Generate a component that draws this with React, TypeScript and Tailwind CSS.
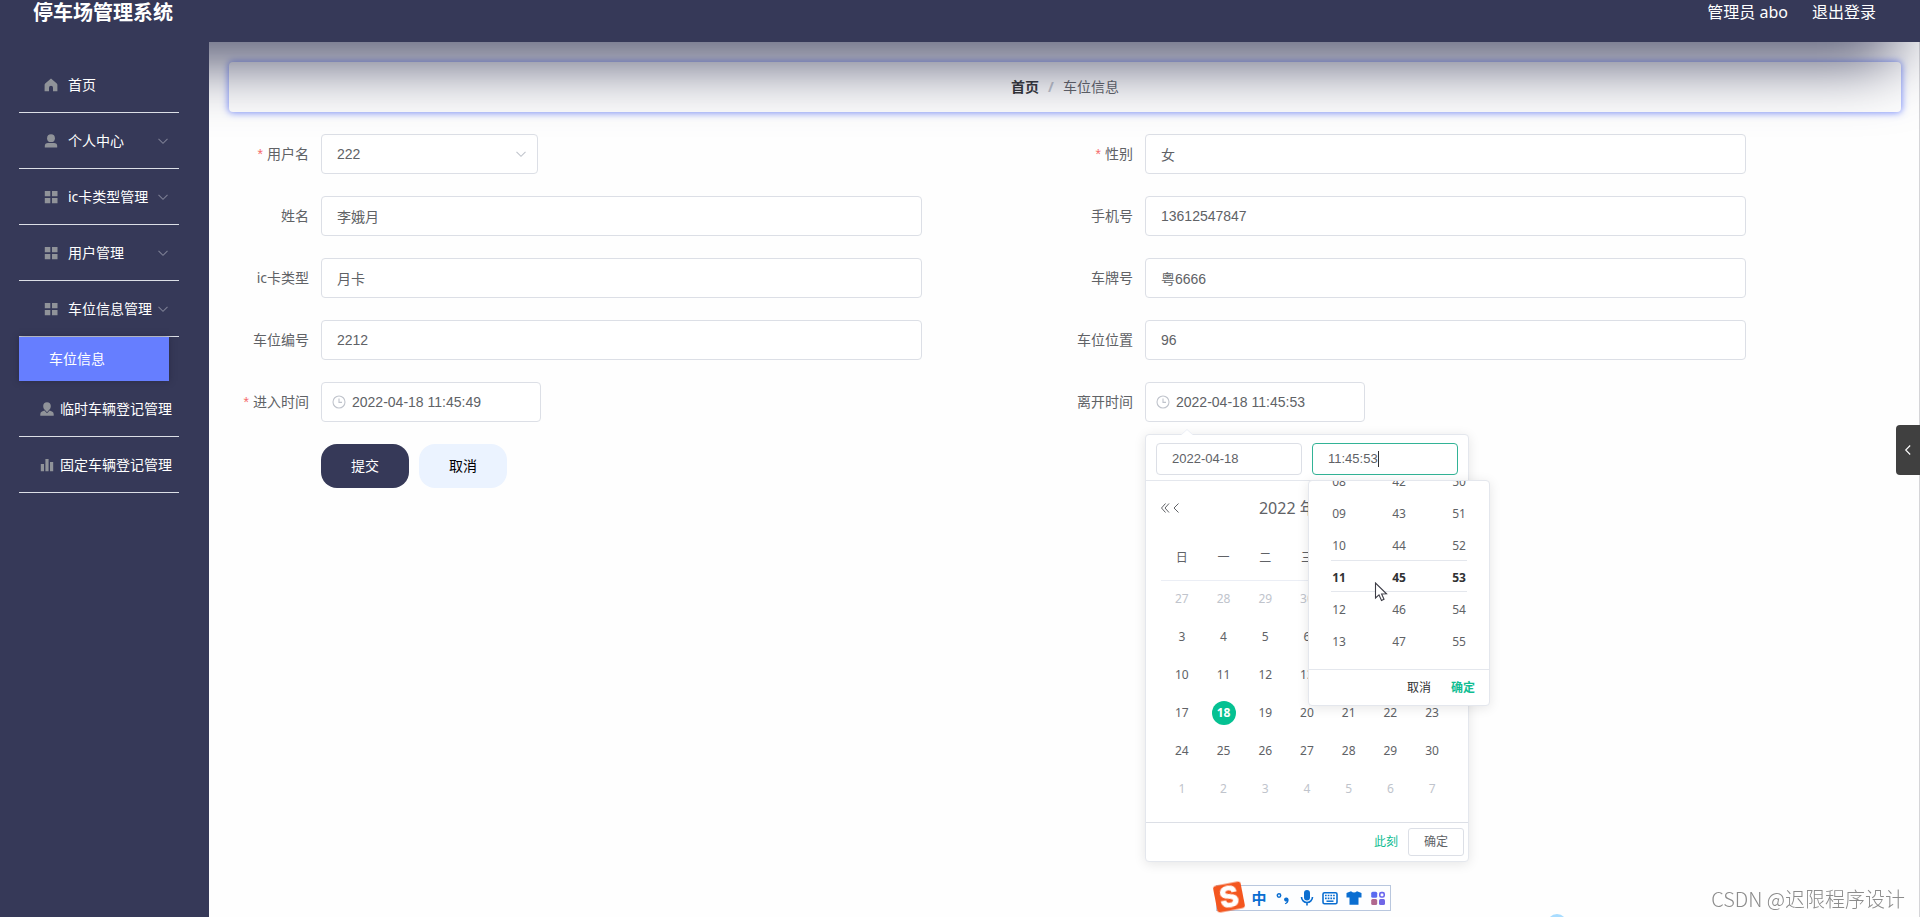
import React from "react";

const LATIN_FORM =
  "font-['Liberation_Sans','Noto_Sans_CJK_SC',sans-serif] text-[14px] text-[#606266]";

function HomeIcon() {
  return (
    <svg viewBox="0 0 14 14" className="h-[14px] w-[14px]" fill="currentColor">
      <path d="M7 0.500 L12.800 5.400 Q13.400 6 13.400 6.800 V13.200 H9 V9.800 A2 2 0 0 0 5 9.800 V13.200 H0.600 V6.800 Q0.600 6 1.200 5.400 Z" />
    </svg>
  );
}

function UserIcon() {
  return (
    <svg viewBox="0 0 14 14" className="h-[14px] w-[14px]" fill="currentColor">
      <circle cx="7" cy="4.200" r="3.900" />
      <path d="M0.800 13.500 V12 Q0.800 9 4 9 H10 Q13.200 9 13.200 12 V13.500 Z" />
    </svg>
  );
}

function GridIcon() {
  return (
    <svg viewBox="0 0 14 14" className="h-[14px] w-[14px]" fill="currentColor">
      <path d="M0.800 1 H6.300 V6.300 H0.800 Z M8 1 H13.500 V6.300 H8 Z M0.800 8 H6.300 V13.300 H0.800 Z M8 8 H13.500 V13.300 H8 Z" />
    </svg>
  );
}

function PersonIcon() {
  return (
    <svg viewBox="0 0 14 14" className="h-[14px] w-[14px]" fill="currentColor">
      <path d="M7 0.300 C9.400 0.300 10.800 2 10.800 4 C10.800 6 9.700 7.600 8.800 8.300 L7 10.200 L5.200 8.300 C4.300 7.600 3.200 6 3.200 4 C3.200 2 4.600 0.300 7 0.300 Z" />
      <path d="M4.400 8.500 L7 11.200 L9.600 8.500 L12 9.600 Q13.700 10.400 13.700 12 V13.800 H0.300 V12 Q0.300 10.400 2 9.600 Z" />
    </svg>
  );
}

function BarsIcon() {
  return (
    <svg viewBox="0 0 14 14" className="h-[14px] w-[14px]" fill="currentColor">
      <path d="M0.800 6 H4 V13.200 H0.800 Z M5.400 1 H8.600 V13.200 H5.400 Z M10 4 H13.200 V13.200 H10 Z" />
    </svg>
  );
}

function Chevron({ className }: { className: string }) {
  return (
    <svg
      viewBox="0 0 12 12"
      className={className}
      fill="none"
      stroke="currentColor"
      strokeWidth="1.100"
    >
      <path d="M1.500 3.800 L6 8.300 L10.500 3.800" />
    </svg>
  );
}

function ClockIcon() {
  return (
    <svg
      viewBox="0 0 14 14"
      className="pointer-events-none absolute top-[13px] left-[11px] h-[14px] w-[14px] text-[#c0c4cc]"
      fill="none"
      stroke="currentColor"
      strokeWidth="1.100"
    >
      <circle cx="7" cy="7" r="6" />
      <path d="M7 3.500 V7.400 H10" />
    </svg>
  );
}

const menu = [
  { text: "首页", icon: <HomeIcon />, arrow: false },
  { text: "个人中心", icon: <UserIcon />, arrow: true },
  { text: "ic卡类型管理", icon: <GridIcon />, arrow: true },
  { text: "用户管理", icon: <GridIcon />, arrow: true },
  { text: "车位信息管理", icon: <GridIcon />, arrow: true },
];

const extraMenu = [
  { text: "临时车辆登记管理", icon: <PersonIcon /> },
  { text: "固定车辆登记管理", icon: <BarsIcon /> },
];

function Sidebar() {
  return (
    <nav className="relative z-20 w-[209px] shrink-0 bg-[#363958] pt-[15px] pr-[30px] pl-[19px] text-[14px] whitespace-nowrap text-white">
      {menu.map((m) => (
        <a
          key={m.text}
          href="#"
          className="flex h-14 items-center border-b border-[#dcdfe6] pr-[10px] pl-5"
        >
          <span className="mr-[5px] flex w-6 justify-center text-[#909399]">{m.icon}</span>
          <span className="flex-1">{m.text}</span>
          {m.arrow && <Chevron className="h-3 w-3 text-[#7c7f93]" />}
        </a>
      ))}
      <a
        href="#"
        className="mr-[10px] flex h-11 items-center bg-[#667eff] pb-[2px] pl-[30px] shadow-[0_0_6px_rgba(30,30,50,0.5)]"
      >
        车位信息
      </a>
      {extraMenu.map((m) => (
        <a
          key={m.text}
          href="#"
          className="flex h-14 items-center border-b border-[#dcdfe6] pl-4"
        >
          <span className="mr-px flex w-6 justify-center text-[#909399]">{m.icon}</span>
          <span>{m.text}</span>
        </a>
      ))}
    </nav>
  );
}

function Field({
  id,
  label,
  required,
  children,
}: {
  id: string;
  label: string;
  required?: boolean;
  children: React.ReactNode;
}) {
  return (
    <div className="flex">
      <label
        htmlFor={id}
        className="w-20 shrink-0 pr-3 text-right leading-10 whitespace-nowrap text-[#606266]"
      >
        {required && (
          <span className="mr-1 font-['Liberation_Sans',sans-serif] text-[#f56c6c]">*</span>
        )}
        {label}
      </label>
      {children}
    </div>
  );
}

function TextField({
  id,
  label,
  value,
  required,
}: {
  id: string;
  label: string;
  value: string;
  required?: boolean;
}) {
  return (
    <Field id={id} label={label} required={required}>
      <input
        id={id}
        type="text"
        defaultValue={value}
        className={`h-10 w-full max-w-[601px] rounded border border-[#dcdfe6] bg-white px-[15px] outline-none ${LATIN_FORM}`}
      />
    </Field>
  );
}

function DateField({
  id,
  label,
  value,
  required,
  children,
}: {
  id: string;
  label: string;
  value: string;
  required?: boolean;
  children?: React.ReactNode;
}) {
  return (
    <Field id={id} label={label} required={required}>
      <div className="relative w-[220px]">
        <input
          id={id}
          type="text"
          defaultValue={value}
          className={`h-10 w-full rounded border border-[#dcdfe6] bg-white pr-[15px] pl-[30px] outline-none ${LATIN_FORM}`}
        />
        <ClockIcon />
        {children}
      </div>
    </Field>
  );
}

const weekdays = ["日", "一", "二", "三", "四", "五", "六"];
const weeks = [
  [27, 28, 29, 30, 31, 1, 2],
  [3, 4, 5, 6, 7, 8, 9],
  [10, 11, 12, 13, 14, 15, 16],
  [17, 18, 19, 20, 21, 22, 23],
  [24, 25, 26, 27, 28, 29, 30],
  [1, 2, 3, 4, 5, 6, 7],
];

function isOtherMonth(week: number, day: number) {
  return (week === 0 && day > 7) || (week === 5 && day < 8);
}

const wheels = [
  ["08", "09", "10", "11", "12", "13"],
  ["42", "43", "44", "45", "46", "47"],
  ["50", "51", "52", "53", "54", "55"],
];

function TimePanel() {
  return (
    <div className="absolute top-full -left-1 z-10 mt-[5px] w-[182px] rounded-sm border border-[#e4e7ed] bg-white text-[12px] shadow-[0_2px_12px_rgba(0,0,0,0.1)]">
      <div className="relative h-[188px] overflow-hidden">
        <div className="-mt-[15px] grid grid-cols-3">
          {wheels.map((wheel) => (
            <ul key={wheel[0]}>
              {wheel.map((v, i) => (
                <li
                  key={v}
                  className={
                    i === 3
                      ? "h-8 text-center leading-8 font-bold text-[#303133]"
                      : "h-8 text-center leading-8 text-[#606266]"
                  }
                >
                  {v}
                </li>
              ))}
            </ul>
          ))}
        </div>
        <div className="pointer-events-none absolute top-[79px] right-[22px] left-[22px] h-8 border-y border-[#e4e7ed]" />
      </div>
      <div className="flex h-9 items-center justify-end gap-5 border-t border-[#e4e7ed] pr-[14px]">
        <button type="button" className="text-[#303133]">
          取消
        </button>
        <button type="button" className="font-bold text-[#10bd92]">
          确定
        </button>
      </div>
    </div>
  );
}

function Arrow({ double, right }: { double?: boolean; right?: boolean }) {
  return (
    <svg
      viewBox="0 0 12 12"
      className={right ? "h-3 w-3 rotate-180" : "h-3 w-3"}
      fill="none"
      stroke="currentColor"
      strokeWidth="1"
    >
      {double ? (
        <path d="M4.500 1.500 L0.500 6 L4.500 10.500 M8 1.500 L4 6 L8 10.500" />
      ) : (
        <path d="M5.500 1.500 L1 6 L5.500 10.500" />
      )}
    </svg>
  );
}

function DatePanel() {
  return (
    <div className="absolute top-full left-0 z-10 mt-3 w-[324px] rounded border border-[#e4e7ed] bg-white text-[12px] text-[#606266] shadow-[0_2px_12px_rgba(0,0,0,0.1)]">
      <svg viewBox="0 0 12 6" className="absolute -top-[6px] left-[35px] h-[6px] w-3">
        <path d="M0 6 L6 0.500 L12 6" fill="#fff" stroke="#ebeef5" strokeWidth="1" />
      </svg>
      <div className="grid h-[46px] grid-cols-2 items-start gap-[10px] border-b border-[#e4e7ed] px-[10px] pt-2">
        <input
          type="text"
          aria-label="日期"
          defaultValue="2022-04-18"
          className="h-8 w-full min-w-0 rounded border border-[#dcdfe6] px-[15px] pb-[2px] font-['Liberation_Sans',sans-serif] text-[13px] outline-none"
        />
        <div className="relative flex min-w-0">
          <input
            type="text"
            aria-label="时间"
            defaultValue="11:45:53"
            className="h-8 w-full min-w-0 rounded border border-[#32b396] px-[15px] pb-[2px] font-['Liberation_Sans',sans-serif] text-[13px] outline-none"
          />
          <span className="absolute top-2 left-[66px] h-4 w-px bg-[#303133]" />
          <TimePanel />
        </div>
      </div>
      <div className="px-[15px] pt-3 pb-[14px]">
        <div className="flex h-[30px] items-center justify-between">
          <div className="flex">
            <button type="button" aria-label="上一年">
              <Arrow double />
            </button>
            <button type="button" aria-label="上个月">
              <Arrow />
            </button>
          </div>
          <div className="flex gap-[10px] text-[16px]">
            <button type="button">2022 年</button>
            <button type="button">4 月</button>
          </div>
          <div className="flex">
            <button type="button" aria-label="下个月">
              <Arrow right />
            </button>
            <button type="button" aria-label="下一年">
              <Arrow double right />
            </button>
          </div>
        </div>
        <table className="mt-4 w-full table-fixed border-collapse">
          <thead>
            <tr className="h-[41px] border-b border-[#ebeef5]">
              {weekdays.map((d) => (
                <th key={d} className="pt-0 pb-[2px] font-normal">
                  {d}
                </th>
              ))}
            </tr>
          </thead>
          <tbody>
            {weeks.map((week, w) => (
              <tr key={w} className="h-[38px]">
                {week.map((day) => (
                  <td key={day} className="p-0 text-center">
                    <button
                      type="button"
                      className={
                        w === 3 && day === 18
                          ? "h-6 w-6 rounded-full bg-[#05c192] font-bold text-white"
                          : isOtherMonth(w, day)
                            ? "h-6 w-6 text-[#c0c4cc]"
                            : "h-6 w-6"
                      }
                    >
                      {day}
                    </button>
                  </td>
                ))}
              </tr>
            ))}
          </tbody>
        </table>
      </div>
      <div className="flex h-[39px] items-center justify-end gap-[10px] border-t border-[#dcdfe6] pr-1">
        <button type="button" className="text-[#10bd92]">
          此刻
        </button>
        <button type="button" className="h-7 w-14 rounded-[3px] border border-[#dcdfe6]">
          确定
        </button>
      </div>
    </div>
  );
}

function ImeBar() {
  return (
    <div className="fixed bottom-[6px] left-[1216px] z-30 flex h-[26px] w-[175px] items-center border border-[#b9c7de] bg-[#fdfeff] text-[#0a6ed1]">
      <svg viewBox="0 0 34 34" className="absolute -top-[6px] -left-[5px] h-[34px] w-[34px]">
        <g transform="rotate(-11 17 17)">
          <rect x="3" y="3.500" width="28" height="27" rx="3" fill="#f4561f" />
          <text
            x="17"
            y="27"
            textAnchor="middle"
            fill="#fff"
            stroke="#fff"
            strokeWidth="1"
            className="font-['Inter',sans-serif] text-[29px] font-bold"
          >
            S
          </text>
        </g>
      </svg>
      <div className="ml-[30px] grid flex-1 grid-cols-6 items-center justify-items-center">
        <span className="pb-px text-[15px] leading-5 font-bold">中</span>
        <svg viewBox="0 0 16 16" className="h-4 w-4">
          <circle cx="4" cy="5.500" r="1.700" fill="none" stroke="currentColor" strokeWidth="1.500" />
          <path
            d="M11.500 7.500 A2 2 0 1 0 11.800 11.300 Q11.500 12.600 9.800 13.400 L10.300 14.200 Q13.900 12.800 13.600 9.400 Q13.300 7.500 11.500 7.500 Z"
            fill="currentColor"
          />
        </svg>
        <svg viewBox="0 0 16 16" className="h-4 w-4">
          <rect x="5" y="0" width="6" height="10.500" rx="3" fill="currentColor" />
          <path
            d="M2.500 7 A5.500 5.500 0 0 0 13.500 7 M8 12.500 V15.500"
            fill="none"
            stroke="currentColor"
            strokeWidth="1.600"
          />
        </svg>
        <svg viewBox="0 0 16 16" className="h-4 w-4">
          <rect x="1" y="2.800" width="14" height="11" rx="1.500" fill="#fff" stroke="currentColor" strokeWidth="1.600" />
          <path
            d="M3 5.500 H13 M3 8.300 H13"
            stroke="currentColor"
            strokeWidth="1.700"
            strokeDasharray="1.700 1"
          />
          <path d="M4.500 11.200 H11.500" stroke="currentColor" strokeWidth="1.500" />
        </svg>
        <svg viewBox="0 0 16 16" className="h-4 w-4" fill="currentColor">
          <path d="M5 1.200 Q8 4 11 1.200 L15.500 3 V7.500 H12.500 V14.800 H3.500 V7.500 H0.500 V3 Z" />
        </svg>
        <svg viewBox="0 0 16 16" className="h-4 w-4">
          <rect x="1.200" y="1.800" width="6" height="6" rx="1.500" fill="#5b6cf0" />
          <rect x="9.800" y="2.600" width="4.400" height="4.400" rx="1.500" fill="none" stroke="#6a66ee" strokeWidth="1.600" />
          <rect x="1.200" y="9" width="6" height="6" rx="1.500" fill="#b0688f" />
          <rect x="9" y="9" width="6" height="6" rx="1.500" fill="#6f66e6" />
        </svg>
      </div>
    </div>
  );
}

export default function App() {
  return (
    <div className="relative flex min-h-screen flex-col overflow-hidden bg-[#fefefe] font-['Noto_Sans','Noto_Sans_CJK_SC',sans-serif] text-[14px]">
      <header className="relative z-10 flex h-[42px] items-start justify-between bg-[#363958] pr-11 pl-[33px] text-white shadow-[-36px_4px_66px_12px_#363958]">
        <h1 className="text-[20px] leading-[26px] font-bold">停车场管理系统</h1>
        <div className="flex gap-6 text-[16px] leading-6">
          <span>管理员 abo</span>
          <button type="button">退出登录</button>
        </div>
      </header>

      <div className="flex flex-1">
        <Sidebar />
        <main className="min-w-0 flex-1 border-r border-[#d5d5d8] pt-5 pr-[18px] pl-5">
          <div className="flex h-[50px] items-center justify-center rounded pb-[2px] shadow-[0_0_7px_1px_rgba(102,126,255,0.8)]">
            <a href="#" className="font-bold text-[#303133]">
              首页
            </a>
            <span className="mx-[9px] font-bold text-[#c0c4cc]">/</span>
            <span className="text-[#606266]">车位信息</span>
          </div>

          <form className="grid grid-cols-2 gap-y-[22px] px-3 pt-[22px]">
            <Field id="username" label="用户名" required>
              <div className="relative w-[217px]">
                <select
                  id="username"
                  className={`h-10 w-full appearance-none rounded border border-[#dcdfe6] bg-white px-[15px] outline-none ${LATIN_FORM}`}
                >
                  <option>222</option>
                </select>
                <Chevron className="pointer-events-none absolute top-[14px] right-[11px] h-3 w-3 text-[#c0c4cc]" />
              </div>
            </Field>
            <TextField id="gender" label="性别" value="女" required />
            <TextField id="name" label="姓名" value="李娥月" />
            <TextField id="phone" label="手机号" value="13612547847" />
            <TextField id="cardType" label="ic卡类型" value="月卡" />
            <TextField id="plate" label="车牌号" value="粤6666" />
            <TextField id="spaceNo" label="车位编号" value="2212" />
            <TextField id="spacePos" label="车位位置" value="96" />
            <DateField id="enter" label="进入时间" value="2022-04-18 11:45:49" required />
            <DateField id="leave" label="离开时间" value="2022-04-18 11:45:53">
              <DatePanel />
            </DateField>
            <div className="flex gap-[10px] pl-20">
              <button type="submit" className="h-11 w-[88px] rounded-2xl bg-[#363958] pb-[2px] text-white">
                提交
              </button>
              <button type="button" className="h-11 w-[88px] rounded-2xl bg-[#ebf3ff] pb-[2px] text-black">
                取消
              </button>
            </div>
          </form>
        </main>
      </div>

      <button
        type="button"
        aria-label="展开"
        className="fixed top-[425px] right-0 z-30 flex h-[50px] w-6 items-center justify-center rounded-l-sm bg-[#404040] text-white"
      >
        <Chevron className="h-3 w-3 rotate-90" />
      </button>

      <ImeBar />

      <div className="fixed right-[15px] bottom-[3px] z-30 font-['Noto_Sans_CJK_SC',sans-serif] text-[20px] leading-[30px] font-light text-[#8c8c8c]">
        CSDN @迟限程序设计
      </div>
      <div className="fixed -bottom-[17px] left-[1547px] h-5 w-5 rounded-full bg-[#a8dcff]" />

      <svg
        viewBox="0 0 14 20"
        className="pointer-events-none fixed top-[582px] left-[1374px] z-40 h-5 w-[14px]"
      >
        <path
          d="M1.500 1 V16 L5 12.800 L7.500 18.500 L10 17.300 L7.600 12 L12.500 11.800 Z"
          fill="#fff"
          stroke="#3c3c46"
          strokeWidth="1.100"
        />
      </svg>
    </div>
  );
}
